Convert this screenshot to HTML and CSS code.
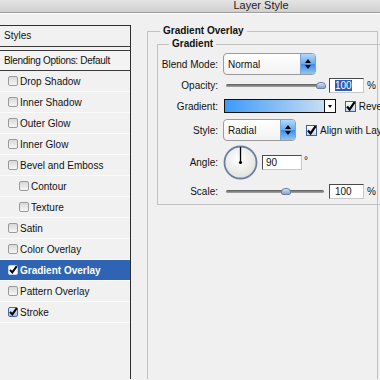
FILE: index.html
```html
<!DOCTYPE html>
<html lang="en">
<head>
    <meta charset="UTF-8">
    <meta name="viewport" content="width=device-width, initial-scale=1.0">
    <title>Layer Style</title>
    <link rel="stylesheet" href="styles.css">
</head>
<body>

    <div class="titlebar"><span>Layer Style</span></div>

    <div class="dialog">
        <div class="styles-list">
            <div class="list-head">Styles</div>
            <div class="list-blend">Blending Options: Default</div>
            <ul class="effects">
                <li><span class="cb"></span>Drop Shadow</li>
                <li><span class="cb"></span>Inner Shadow</li>
                <li><span class="cb"></span>Outer Glow</li>
                <li><span class="cb"></span>Inner Glow</li>
                <li><span class="cb"></span>Bevel and Emboss</li>
                <li class="sub"><span class="cb"></span>Contour</li>
                <li class="sub"><span class="cb"></span>Texture</li>
                <li><span class="cb"></span>Satin</li>
                <li><span class="cb"></span>Color Overlay</li>
                <li class="selected">
                    <span class="cb checked"><svg viewBox="0 0 10 10" width="10" height="10"><path d="M2 4.8 L4.3 7.4 L8.8 1.2" fill="none" stroke="#000" stroke-width="2"/></svg></span>Gradient Overlay
                </li>
                <li><span class="cb"></span>Pattern Overlay</li>
                <li>
                    <span class="cb checked"><svg viewBox="0 0 10 10" width="10" height="10"><path d="M2 4.8 L4.3 7.4 L8.8 1.2" fill="none" stroke="#000" stroke-width="2"/></svg></span>Stroke
                </li>
            </ul>
        </div>

        <fieldset class="group outer">
            <legend>Gradient Overlay</legend>
            <fieldset class="group inner">
                <legend>Gradient</legend>

                <div class="row row-blend">
                    <label class="lbl">Blend Mode:</label>
                    <div class="select select-wide">
                        <span>Normal</span>
                        <span class="arrows"><i class="up"></i><i class="down"></i></span>
                    </div>
                </div>

                <div class="row row-opacity">
                    <label class="lbl">Opacity:</label>
                    <div class="slider"><span class="thumb" style="left: 90px"></span></div>
                    <div class="num"><span class="sel">100</span></div>
                    <span class="unit">%</span>
                </div>

                <div class="row row-gradient">
                    <label class="lbl">Gradient:</label>
                    <div class="gradient">
                        <span class="fill"></span>
                        <span class="drop"><i class="down"></i></span>
                    </div>
                    <span class="cb-big"><svg viewBox="0 0 11 11" width="11" height="11"><path d="M2 5.5 L4.6 8.4 L9.6 1.2" fill="none" stroke="#000" stroke-width="2.2"/></svg></span>
                    <span class="opt">Reverse</span>
                </div>

                <div class="row row-style">
                    <label class="lbl">Style:</label>
                    <div class="select select-narrow">
                        <span>Radial</span>
                        <span class="arrows"><i class="up"></i><i class="down"></i></span>
                    </div>
                    <span class="cb-big cb-align"><svg viewBox="0 0 11 11" width="11" height="11"><path d="M2 5.5 L4.6 8.4 L9.6 1.2" fill="none" stroke="#000" stroke-width="2.2"/></svg></span>
                    <span class="opt">Align with Layer</span>
                </div>

                <div class="row row-angle">
                    <label class="lbl">Angle:</label>
                    <svg class="dial" viewBox="0 0 35 35" width="35" height="35">
                        <defs>
                            <radialGradient id="dialFill" cx="0.45" cy="0.4" r="0.6">
                                <stop offset="0" stop-color="#ffffff"/>
                                <stop offset="1" stop-color="#e2e2de"/>
                            </radialGradient>
                        </defs>
                        <circle cx="17.5" cy="17.5" r="16" fill="url(#dialFill)" stroke="#6a7fa6" stroke-width="1.8"/>
                        <line x1="17.5" y1="17.5" x2="17.5" y2="2" stroke="#000" stroke-width="1.3"/>
                        <circle cx="17.5" cy="17.5" r="1.6" fill="#000"/>
                    </svg>
                    <div class="num num-angle">90</div>
                    <span class="degree">°</span>
                </div>

                <div class="row row-scale">
                    <label class="lbl">Scale:</label>
                    <div class="slider"><span class="thumb" style="left: 55px"></span></div>
                    <div class="num">100</div>
                    <span class="unit">%</span>
                </div>
            </fieldset>
        </fieldset>
    </div>

</body>
</html>
```

FILE: styles.css
```css
body {
    font-family: "Liberation Sans", Arial, sans-serif;
    font-size: 10px;
    margin: 0;
    padding: 0;
    width: 380px;
    height: 380px;
    overflow: hidden;
    background-color: #f0f0f0;
    color: #111;
}
.titlebar {
    height: 12px;
    padding-left: 142px;
    background: linear-gradient(#e4e4e4, #d0d0d0);
    border-bottom: 1px solid #9c9c9c;
    box-shadow: 0 1px 0 #fff;
    display: flex;
    justify-content: center;
    align-items: flex-end;
    overflow: hidden;
}
.titlebar span {
    font-size: 11px;
    line-height: 12px;
    margin-bottom: 1px;
    color: #222;
}
.dialog {
    display: flex;
    margin-top: 12px;
    height: 354px;
    overflow: hidden;
}

/* left list of effects */
.styles-list {
    width: 131px;
    height: 354px;
    box-sizing: border-box;
    flex-shrink: 0;
    background-color: #f1f1f1;
    border: 1px solid #2e2e2e;
    border-left: none;
    border-bottom: none;
}
.list-head {
    height: 20px;
    line-height: 20px;
    padding-left: 4px;
    border-bottom: 1px solid #3a3a3a;
}
.list-blend {
    margin-top: 3px;
    height: 19px;
    line-height: 19px;
    padding-left: 4px;
    letter-spacing: -0.3px;
    border-top: 1px solid #3a3a3a;
    border-bottom: 1px solid #3a3a3a;
    background-color: #f3f3f3;
}
.effects {
    list-style: none;
    margin: 0;
    padding: 0;
}
.effects li {
    height: 20px;
    display: flex;
    align-items: center;
    padding-left: 8px;
    border-bottom: 1px solid #fbfbfb;
    white-space: nowrap;
}
.effects li.sub {
    padding-left: 19px;
}
.effects li.selected {
    background-color: #2f63b4;
    color: #fff;
    font-weight: bold;
}
.cb {
    width: 10px;
    height: 10px;
    box-sizing: border-box;
    margin-right: 2px;
    border: 1px solid #9a9a9a;
    border-radius: 2px;
    background: linear-gradient(#d8d8d8, #f6f6f6);
    display: flex;
    align-items: center;
    justify-content: center;
}
.cb.checked {
    border-color: #4c6a9c;
    background: linear-gradient(#e8f0fb, #9fbde4);
}
.selected .cb.checked {
    border-color: #c8d6ee;
    background: #fff;
}
.cb svg {
    flex-shrink: 0;
}

/* right side groups */
.group {
    margin: 0;
    box-sizing: border-box;
    border: 1px solid #c2c2c2;
    min-inline-size: 0;
}
.group legend {
    font-weight: bold;
    line-height: 12px;
    padding: 0 3px;
}
.outer {
    margin-left: 16px;
    width: 231px;
    height: 354px;
    padding: 1px 0 0 9px;
    border-bottom: none;
}
.outer > legend {
    margin-left: 3px;
}
.inner {
    width: 240px;
    padding: 0 0 5px 0;
}
.inner > legend {
    margin-left: 11px;
}

.row {
    display: flex;
    align-items: center;
    white-space: nowrap;
}
.lbl {
    width: 60px;
    flex-shrink: 0;
    margin-right: 5px;
    text-align: right;
}
.row-blend { margin-top: 3px; height: 22px; }
.row-opacity { margin-top: 3px; height: 15px; }
.row-gradient { margin-top: 6px; height: 14px; }
.row-style { margin-top: 6px; height: 22px; }
.row-angle { margin-top: 4px; height: 35px; }
.row-scale { margin-top: 3px; height: 16px; }

.select {
    height: 22px;
    box-sizing: border-box;
    border: 1px solid #9a9a9a;
    border-radius: 4px;
    background: linear-gradient(#fff, #f2f2f2);
    display: flex;
    align-items: center;
    justify-content: space-between;
    padding-left: 4px;
    overflow: hidden;
}
.select-wide { width: 93px; }
.select-narrow { width: 73px; }
.arrows {
    width: 14px;
    height: 100%;
    border-left: 1px solid #7ba6d6;
    background: linear-gradient(#b2d8fb, #66aaf0 50%, #3f8de5 52%, #8fc6f7);
    display: flex;
    flex-direction: column;
    align-items: center;
    justify-content: center;
    gap: 2px;
}
.up {
    border-left: 3px solid transparent;
    border-right: 3px solid transparent;
    border-bottom: 4px solid #000;
}
.down {
    border-left: 3px solid transparent;
    border-right: 3px solid transparent;
    border-top: 4px solid #000;
}

.slider {
    position: relative;
    width: 98px;
    height: 3px;
    margin-left: 3px;
    border-radius: 2px;
    background: linear-gradient(#5a5a5a, #a8a8a8);
}
.thumb {
    position: absolute;
    top: -2px;
    width: 8px;
    height: 5px;
    border: 1px solid #6a82aa;
    border-radius: 4px 4px 2px 2px;
    background: linear-gradient(#d4dff0, #8aa3cb);
}
.num {
    width: 35px;
    height: 15px;
    box-sizing: border-box;
    margin-left: 5px;
    padding-left: 5px;
    border: 1px solid;
    border-color: #4a4a4a #c8c8c8 #c8c8c8 #4a4a4a;
    background-color: #fff;
    display: flex;
    align-items: center;
}
.num .sel {
    background-color: #2a5db4;
    color: #fff;
    line-height: 11px;
}
.num-angle {
    width: 40px;
    margin-left: 4px;
    padding-left: 3px;
}
.unit {
    margin-left: 3px;
}
.degree {
    margin-left: 2px;
    align-self: flex-start;
    margin-top: 10px;
}

.gradient {
    width: 116px;
    height: 14px;
    box-sizing: border-box;
    margin-left: 1px;
    border: 1px solid #111;
    display: flex;
}
.gradient .fill {
    flex: 1;
    background: linear-gradient(to right, #3e9af8, #c8ddf2);
}
.gradient .drop {
    width: 10px;
    border-left: 1px solid #111;
    background-color: #fff;
    display: flex;
    align-items: center;
    justify-content: center;
}
.gradient .drop .down {
    border-left-width: 2.5px;
    border-right-width: 2.5px;
    border-top-width: 3px;
}
.cb-big {
    width: 11px;
    height: 11px;
    box-sizing: border-box;
    margin-left: 9px;
    border: 1px solid #3d5f9c;
    background: linear-gradient(#ffffff, #c4d6ee);
    display: flex;
    align-items: center;
    justify-content: center;
}
.cb-big svg {
    flex-shrink: 0;
}
.cb-align {
    margin-left: 10px;
}
.opt {
    margin-left: 3px;
}
.dial {
    flex-shrink: 0;
}
```
